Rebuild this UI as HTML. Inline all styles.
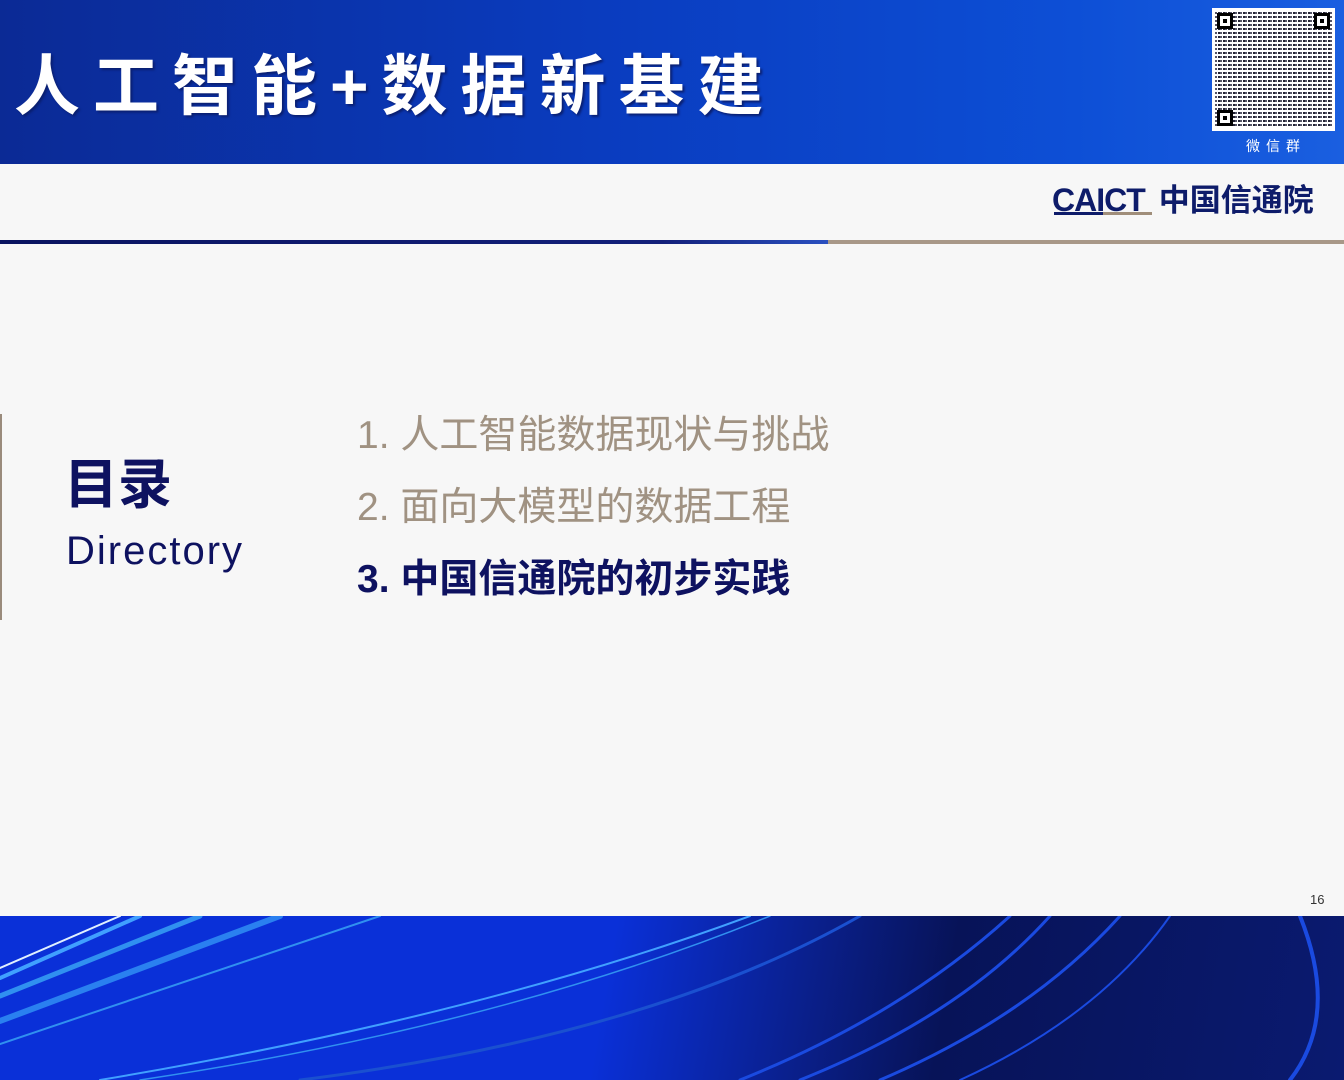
<!DOCTYPE html>
<html><head><meta charset="utf-8"><style>
*{margin:0;padding:0;box-sizing:border-box}
body{width:1344px;height:1080px;position:relative;overflow:hidden;background:#f7f7f7;font-family:"Liberation Sans","Noto Sans CJK SC",sans-serif}
.hdr{position:absolute;left:0;top:0;width:1344px;height:164px;background:linear-gradient(90deg,#0b2a95 0%,#0a3cbf 45%,#0d4fd6 80%,#1a5fe0 100%)}
.title{position:absolute;left:14px;top:44px;color:#fff;font-size:66px;font-weight:bold;letter-spacing:13px;white-space:nowrap;line-height:84px;text-shadow:2px 2px 2px #0a1f70}
.qr{position:absolute;left:1212px;top:8px;width:123px;height:123px;background:#fff;border:3px solid #fff;
background-image:repeating-linear-gradient(0deg,#fff 0 2px,transparent 2px 4px),repeating-linear-gradient(90deg,#556 0 2px,#fff 2px 3px,#223 3px 5px)}
.fin{position:absolute;width:16px;height:16px;border:3px solid #000;background:#fff}
.fin::after{content:"";position:absolute;left:3px;top:3px;width:4px;height:4px;background:#000}
.wx{position:absolute;left:1246px;top:136px;color:#fff;font-size:14px;letter-spacing:6px}
.logo{position:absolute;left:1052px;top:180px;white-space:nowrap;line-height:40px}
.caict{font-size:32px;font-weight:bold;color:#0e1c6a;letter-spacing:-1px}
.cn{font-size:31px;font-weight:bold;color:#0e1c6a;margin-left:14px}
.ul{position:absolute;left:1054px;top:212px;width:98px;height:3px;background:linear-gradient(90deg,#0e1c6a 50%,#a08e7a 50%)}
.line1{position:absolute;left:0;top:240px;width:828px;height:4px;background:linear-gradient(90deg,#0a1460,#13207a 80%,#2a50c0)}
.line2{position:absolute;left:828px;top:240px;width:516px;height:4px;background:#a89888}
.vbar{position:absolute;left:0;top:414px;width:2px;height:206px;background:#9a8b7c}
.ml{position:absolute;left:64px;top:450px;color:#0e1260;font-size:54px;font-weight:bold;line-height:70px}
.dir{position:absolute;left:66px;top:526px;color:#0e1260;font-size:40px;line-height:50px;letter-spacing:2px}
.it{position:absolute;left:357px;font-size:39px;white-space:nowrap;line-height:44px}
.pn{position:absolute;left:1310px;top:892px;font-size:13px;color:#333}
.ftr{position:absolute;left:0;top:916px;width:1344px;height:164px;overflow:hidden;background:linear-gradient(100deg,#0a30d8 0%,#0a30d8 45%,#0a1f8a 60%,#071358 70%,#0a1a70 100%)}
</style></head><body>
<div class="hdr">
<div class="title">人工智能+数据新基建</div>
<div class="qr"><div class="fin" style="left:2px;top:2px"></div><div class="fin" style="right:2px;top:2px"></div><div class="fin" style="left:2px;bottom:2px"></div></div>
<div class="wx">微信群</div>
</div>
<div class="logo"><span class="caict">CAICT</span><span class="cn">中国信通院</span></div>
<div class="ul"></div>
<div class="line1"></div><div class="line2"></div>
<div class="vbar"></div>
<div class="ml">目录</div>
<div class="dir">Directory</div>
<div class="it" style="top:414px;color:#a09282">1. 人工智能数据现状与挑战</div>
<div class="it" style="top:486px;color:#a09282">2. 面向大模型的数据工程</div>
<div class="it" style="top:558px;color:#0e1260;font-weight:bold">3. 中国信通院的初步实践</div>
<div class="pn">16</div>
<div class="ftr">
<svg width="1344" height="164" style="position:absolute;left:0;top:0">
<g fill="none" stroke-linecap="round">
<path d="M0 52 L120 0" stroke="#e0f0ff" stroke-width="2"/>
<path d="M0 62 L140 0" stroke="#40a0ff" stroke-width="4"/>
<path d="M0 80 L200 0" stroke="#3090f0" stroke-width="5"/>
<path d="M0 105 L280 0" stroke="#2a80f0" stroke-width="6"/>
<path d="M0 128 L380 0" stroke="#3090f0" stroke-width="2"/>
<path d="M100 164 Q480 100 750 0" stroke="#40a0ff" stroke-width="2"/>
<path d="M140 164 Q500 110 770 0" stroke="#3090f0" stroke-width="1.5"/>
<path d="M300 164 Q650 120 860 0" stroke="#1a50d0" stroke-width="3"/>
<path d="M740 164 Q900 100 1010 0" stroke="#1a4ae0" stroke-width="3"/>
<path d="M800 164 Q960 100 1050 0" stroke="#1a4ae0" stroke-width="3"/>
<path d="M880 164 Q1030 100 1120 0" stroke="#1a4ae0" stroke-width="3"/>
<path d="M960 164 Q1100 100 1170 0" stroke="#1a4ae0" stroke-width="2"/>
<path d="M1290 164 Q1340 100 1300 0" stroke="#1a4ae0" stroke-width="4"/>
</g></svg>
</div>
</body></html>
